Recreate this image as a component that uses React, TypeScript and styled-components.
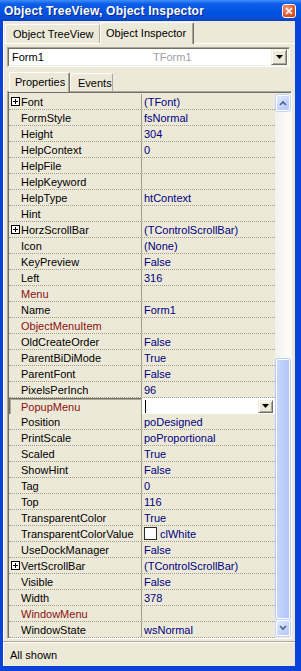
import React from 'react';
import styled, { createGlobalStyle } from 'styled-components';

const Global = createGlobalStyle`
  html, body { margin: 0; padding: 0; background: #ffffff; }
  body { font-family: "Liberation Sans", Arial, sans-serif; font-size: 11px; color: #000; }
  * { box-sizing: border-box; }
`;

const Window = styled.div`
  width: 301px;
  height: 671px;
  display: flex;
  flex-direction: column;
  background: #0b43d9;
`;

const TitleBar = styled.div`
  height: 21px;
  flex: none;
  display: flex;
  align-items: center;
  justify-content: space-between;
  padding: 0 5px 0 4px;
  background: linear-gradient(180deg, #3d8ff9 0%, #0e5de8 18%, #0052e0 60%, #0a4fd8 85%, #0840c4 100%);
`;

const Title = styled.span`
  color: #ffffff;
  font-family: "Liberation Sans", Arial, sans-serif;
  font-weight: bold;
  font-size: 12px;
  letter-spacing: 0.2px;
  text-shadow: 1px 1px 0 #0a2a8a;
  white-space: nowrap;
`;

const CloseButton = styled.div`
  width: 14px;
  height: 14px;
  border: 1px solid #ffffff;
  border-radius: 3px;
  background: radial-gradient(circle at 35% 30%, #f29a7c 0%, #e2592f 55%, #c43c15 100%);
  display: flex;
  align-items: center;
  justify-content: center;
`;

const Body = styled.div`
  flex: 1;
  display: flex;
  flex-direction: column;
  background: #ece9d8;
  border-style: solid;
  border-color: #0b43d9;
  border-width: 0 6px 6px 3px;
  box-shadow: inset 1px 0 0 #fffefa;
`;

const TabStrip = styled.div`
  height: 22px;
  flex: none;
  display: flex;
  align-items: flex-end;
  padding-left: 2px;
`;

const Tab = styled.div<{ $active?: boolean; $h: number; $w: number }>`
  height: ${(p) => p.$h}px;
  width: ${(p) => p.$w}px;
  display: flex;
  align-items: center;
  padding-left: ${(p) => (p.$active ? 5 : 7)}px;
  padding-bottom: ${(p) => (p.$active ? 2 : 0)}px;
  background: #ece9d8;
  border-top: 1px solid #ffffff;
  border-left: 1px solid #ffffff;
  border-right: 1px solid ${(p) => (p.$active ? '#716f64' : '#aca899')};
  ${(p) => (p.$active ? 'box-shadow: inset -1px 0 0 #aca899; margin-bottom: -1px; position: relative; z-index: 1;' : '')}
  border-radius: 2px 2px 0 0;
  white-space: nowrap;
`;

const Page = styled.div`
  flex: 1;
  display: flex;
  flex-direction: column;
  border-top: 1px solid #ffffff;
  padding: 3px 3px 0 4px;
`;

const Combo = styled.div`
  height: 20px;
  flex: none;
  display: flex;
  align-items: center;
  background: #ffffff;
  border-top: 1px solid #aca899;
  border-left: 1px solid #aca899;
  border-right: 1px solid #ffffff;
  border-bottom: 1px solid #ffffff;
  box-shadow: inset 1px 1px 0 #716f64, inset -1px -1px 0 #f1efe2;
  padding: 0 2px 0 4px;
  margin-right: 2px;
`;

const ComboName = styled.span`
  width: 141px;
`;

const ComboType = styled.span`
  flex: 1;
  color: #a0a0a0;
`;

const DropButton = styled.div<{ $w: number; $h: number }>`
  width: ${(p) => p.$w}px;
  height: ${(p) => p.$h}px;
  flex: none;
  display: flex;
  align-items: center;
  justify-content: center;
  background: #ece9d8;
  border-top: 1px solid #f1efe2;
  border-left: 1px solid #f1efe2;
  border-right: 1px solid #716f64;
  border-bottom: 1px solid #716f64;
  box-shadow: inset 1px 1px 0 #ffffff, inset -1px -1px 0 #aca899;
`;

const InnerTabStrip = styled.div`
  height: 22px;
  flex: none;
  display: flex;
  align-items: flex-end;
  padding-left: 2px;
  margin-top: 2px;
`;

const Grid = styled.div`
  flex: 1;
  display: flex;
  min-height: 0;
  border-top: 1px solid #aca899;
  border-left: 1px solid #aca899;
  border-right: 1px solid #ffffff;
  border-bottom: 1px solid #ffffff;
  box-shadow: inset 1px 1px 0 #716f64;
  padding: 2px 0 0 1px;
  background: #ece9d8;
`;

const Rows = styled.div`
  flex: 1;
  display: flex;
  flex-direction: column;
`;

const Row = styled.div`
  height: 16px;
  flex: none;
  display: grid;
  grid-template-columns: 133px 1fr;
  border-bottom: 1px dotted #a09c8c;
`;

const NameCell = styled.div<{ $red?: boolean; $selected?: boolean }>`
  display: flex;
  align-items: center;
  padding-left: ${(p) => (p.$selected ? 11 : 12)}px;
  color: ${(p) => (p.$red ? '#8e1010' : '#000000')};
  border-right: 1px solid #a09c8c;
  white-space: nowrap;
  overflow: hidden;
  ${(p) =>
    p.$selected
      ? 'border-top: 1px solid #716f64; border-left: 1px solid #716f64; box-shadow: inset 1px 1px 0 #aca899; margin-bottom: -1px; background: #ece9d8;'
      : ''}
`;

const ExpandBox = styled.span`
  width: 9px;
  height: 9px;
  margin-left: -10px;
  margin-right: 1px;
  flex: none;
  display: inline-flex;
`;

const ValueCell = styled.div`
  display: flex;
  align-items: center;
  padding-left: 2px;
  color: #00007f;
  white-space: nowrap;
  overflow: hidden;
`;

const EditCell = styled.div`
  display: flex;
  align-items: center;
  background: #ffffff;
  margin-bottom: -1px;
  padding: 0 2px 0 3px;
  position: relative;
  z-index: 1;
`;

const Caret = styled.span`
  width: 1px;
  height: 13px;
  background: #000;
  flex: none;
`;

const Spacer = styled.span`
  flex: 1;
`;

const Swatch = styled.span`
  width: 13px;
  height: 13px;
  flex: none;
  border: 1px solid #2b2b2b;
  background: #ffffff;
  margin-right: 3px;
`;

const ScrollBar = styled.div`
  width: 16px;
  flex: none;
  display: flex;
  flex-direction: column;
  background: linear-gradient(90deg, #f3f1ec 0%, #fdfdfa 100%);
  margin-bottom: 1px;
`;

const ScrollBtn = styled.div`
  height: 16px;
  flex: none;
  display: flex;
  align-items: center;
  justify-content: center;
  margin: 1px;
  border: 1px solid #ffffff;
  border-radius: 2px;
  background: linear-gradient(135deg, #e4ecfd 0%, #c3d3fd 60%, #b4c8f6 100%);
  box-shadow: 0 0 0 1px #c3d3fd;
`;

const Track = styled.div<{ $grow: number }>`
  flex: ${(p) => p.$grow};
`;

const Thumb = styled.div<{ $grow: number }>`
  flex: ${(p) => p.$grow};
  margin: 0 1px;
  border: 1px solid #ffffff;
  border-radius: 2px;
  background: linear-gradient(90deg, #c9d8fc 0%, #bccdfa 50%, #b2c5f6 100%);
  box-shadow: 0 0 0 1px #b9ccf8;
`;

const StatusBar = styled.div`
  height: 25px;
  flex: none;
  display: flex;
  align-items: center;
  padding: 2px 0 0 7px;
  margin-top: 2px;
  border-top: 1px solid #aca899;
  box-shadow: inset 0 1px 0 #ffffff;
`;

type Prop = { name: string; value?: string; red?: boolean; expand?: boolean; swatch?: boolean; selected?: boolean };

const props: Prop[] = [
  { name: 'Font', value: '(TFont)', expand: true },
  { name: 'FormStyle', value: 'fsNormal' },
  { name: 'Height', value: '304' },
  { name: 'HelpContext', value: '0' },
  { name: 'HelpFile' },
  { name: 'HelpKeyword' },
  { name: 'HelpType', value: 'htContext' },
  { name: 'Hint' },
  { name: 'HorzScrollBar', value: '(TControlScrollBar)', expand: true },
  { name: 'Icon', value: '(None)' },
  { name: 'KeyPreview', value: 'False' },
  { name: 'Left', value: '316' },
  { name: 'Menu', red: true },
  { name: 'Name', value: 'Form1' },
  { name: 'ObjectMenuItem', red: true },
  { name: 'OldCreateOrder', value: 'False' },
  { name: 'ParentBiDiMode', value: 'True' },
  { name: 'ParentFont', value: 'False' },
  { name: 'PixelsPerInch', value: '96' },
  { name: 'PopupMenu', red: true, selected: true },
  { name: 'Position', value: 'poDesigned' },
  { name: 'PrintScale', value: 'poProportional' },
  { name: 'Scaled', value: 'True' },
  { name: 'ShowHint', value: 'False' },
  { name: 'Tag', value: '0' },
  { name: 'Top', value: '116' },
  { name: 'TransparentColor', value: 'True' },
  { name: 'TransparentColorValue', value: 'clWhite', swatch: true },
  { name: 'UseDockManager', value: 'False' },
  { name: 'VertScrollBar', value: '(TControlScrollBar)', expand: true },
  { name: 'Visible', value: 'False' },
  { name: 'Width', value: '378' },
  { name: 'WindowMenu', red: true },
  { name: 'WindowState', value: 'wsNormal' },
];

const Plus = () => (
  <svg width="9" height="9" viewBox="0 0 9 9">
    <rect x="0.5" y="0.5" width="8" height="8" fill="#ffffff" stroke="#000" />
    <path d="M2 4.5h5M4.5 2v5" stroke="#000" />
  </svg>
);

const DownArrow = () => (
  <svg width="7" height="4" viewBox="0 0 7 4">
    <path d="M0 0h7L3.5 4z" fill="#000" />
  </svg>
);

const Chevron = ({ up }: { up?: boolean }) => (
  <svg width="8" height="6" viewBox="0 0 8 6">
    <path d={up ? 'M1 5l3-3 3 3' : 'M1 1l3 3 3-3'} fill="none" stroke="#4d6185" strokeWidth="1.6" />
  </svg>
);

export default function App() {
  return (
    <>
      <Global />
      <Window>
        <TitleBar>
          <Title>Object TreeView, Object Inspector</Title>
          <CloseButton>
            <svg width="8" height="8" viewBox="0 0 8 8">
              <path d="M1 1l6 6M7 1l-6 6" stroke="#fff" strokeWidth="1.6" />
            </svg>
          </CloseButton>
        </TitleBar>
        <Body>
          <TabStrip>
            <Tab $h={19} $w={95}>Object TreeView</Tab>
            <Tab $active $h={22} $w={94}>Object Inspector</Tab>
          </TabStrip>
          <Page>
            <Combo>
              <ComboName>Form1</ComboName>
              <ComboType>TForm1</ComboType>
              <DropButton $w={16} $h={16}>
                <DownArrow />
              </DropButton>
            </Combo>
            <InnerTabStrip>
              <Tab $active $h={20} $w={61}>Properties</Tab>
              <Tab $h={18} $w={43}>Events</Tab>
            </InnerTabStrip>
            <Grid>
              <Rows>
                {props.map((p) => (
                  <Row key={p.name}>
                    <NameCell $red={p.red} $selected={p.selected}>
                      {p.expand && (
                        <ExpandBox>
                          <Plus />
                        </ExpandBox>
                      )}
                      {p.name}
                    </NameCell>
                    {p.selected ? (
                      <EditCell>
                        <Caret />
                        <Spacer />
                        <DropButton $w={15} $h={13}>
                          <DownArrow />
                        </DropButton>
                      </EditCell>
                    ) : (
                      <ValueCell>
                        {p.swatch && <Swatch />}
                        {p.value}
                      </ValueCell>
                    )}
                  </Row>
                ))}
              </Rows>
              <ScrollBar>
                <ScrollBtn>
                  <Chevron up />
                </ScrollBtn>
                <Track $grow={248} />
                <Thumb $grow={260} />
                <ScrollBtn>
                  <Chevron />
                </ScrollBtn>
              </ScrollBar>
            </Grid>
          </Page>
          <StatusBar>All shown</StatusBar>
        </Body>
      </Window>
    </>
  );
}
